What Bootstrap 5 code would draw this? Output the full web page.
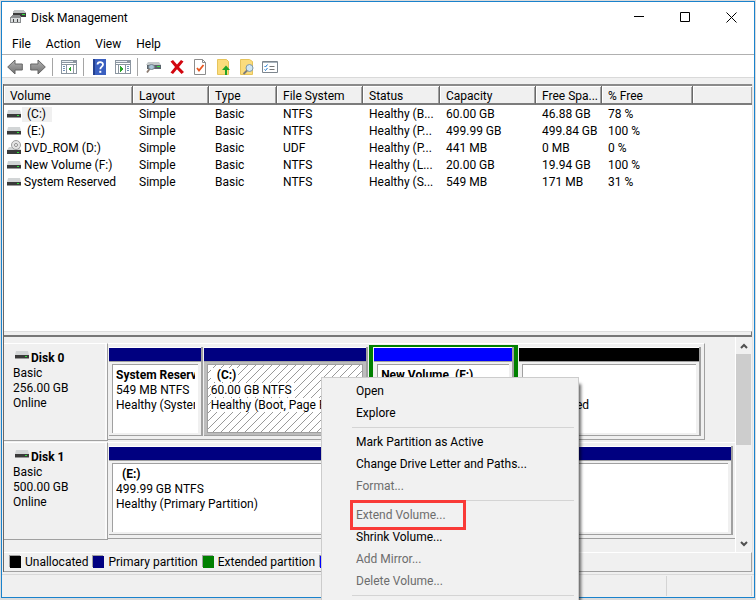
<!DOCTYPE html>
<html lang="en">
<head>
<meta charset="utf-8">
<meta name="viewport" content="width=device-width, initial-scale=1">
<title>Disk Management</title>
<link rel="stylesheet" href="https://cdn.jsdelivr.net/npm/bootstrap@5.3.0/dist/css/bootstrap.min.css">
<style>
  :root { --face: #f0f0f0; --edge: #a0a0a0; --dark: #696969; --navy: #000080; }
  html, body { height: 100%; }
  body { font: 12px/15px Roboto, "Open Sans", sans-serif; color: #000; background: #dcdcdc; overflow: hidden; padding: 1px 1px 2px; }
  button { font: inherit; color: inherit; background: none; border: 0; padding: 0; text-align: left; }
  svg { display: block; flex: none; }
  .app-window { border: 1px solid #1a82cc; height: 100%; background: var(--face); }
  .title-row { height: 30px; padding-left: 8px; gap: 5px; }
  .title-text { padding-top: 2px; }
  .caption-btn { width: 46px; height: 30px; display: flex; align-items: center; justify-content: center; }
  .menu-row { height: 22px; padding: 2px 0 0 10px; gap: 15px; }
  .tool-row { height: 24px; border-top: 1px solid #b0b0b0; border-bottom: 1px solid #d9d9d9; padding: 2px 0 0 5px; background: #fff; }
  .tool-row .sep { width: 1px; height: 18px; background: #a5a5a5; margin: 0 8px 0 6px; }
  .tool-row button + button { margin-left: 9px; }
  .tool-row button + button.tight { margin-left: 7px; }
  .work { margin: 6px 1px 0 1px; border-left: 1px solid var(--dark); border-right: 1px solid #e3e3e3; }
  .vol-list { border-top: 2px solid #8a8a8a; background: #fff; flex: 0 1 247px; }
  .vol-table { table-layout: fixed; width: 100%; border-collapse: separate; border-spacing: 0; }
  .vol-table th { font-weight: 400; height: 19px; line-height: 14px; padding: 3px 0 0 6px; background: var(--face); border-right: 1px solid var(--dark); border-bottom: 2px solid #7c7c7c; box-shadow: inset 1px 1px #fff, inset -1px 0 var(--edge); white-space: nowrap; overflow: hidden; text-overflow: ellipsis; }
  .vol-table th:last-child { border-right: 0; }
  .vol-table td { height: 17px; line-height: 15px; padding: 2px 2px 0 6px; white-space: nowrap; overflow: hidden; text-overflow: ellipsis; }
  .vol-table td:first-child { padding-left: 3px; }
  .vol-item { display: flex; align-items: center; gap: 3px; }
  .vol-item svg { margin: -1px 0 1px; }
  .vol-item .letter { padding: 0 6px 0 5px; margin-left: -2px; }
  .current { background: var(--face); }
  .splitter { height: 6px; border-top: 1px solid #dedede; border-bottom: 2px solid #777; border-right: 1px solid #777; background: var(--face); }
  .disk-area { padding-top: 6px; }
  .disk-row { height: 99px; }
  .disk-label { width: 104px; height: 98px; border-top: 1px solid #fff; border-right: 1px solid var(--edge); border-bottom: 1px solid var(--edge); padding: 7px 0 0 9px; box-shadow: inset -2px 0 #fafafa; flex: none; }
  .disk-name { display: flex; gap: 2px; padding-left: 2px; }
  .disk-strip { height: 97px; border-top: 1px solid #fff; border-right: 1px solid var(--edge); border-bottom: 1px solid var(--edge); padding: 3px 3px 3px 0; }
  .disk-strip.inset { margin-right: 30px; }
  .disk-strip.whole { border-right: 0; padding-right: 2px; }
  .part { min-width: 0; border-right: 2px solid var(--edge); border-bottom: 1px solid var(--edge); margin-left: 1px; display: flex; flex-direction: column; }
  .part-bar { height: 14px; background: var(--navy); border-top: 1px solid #fff; flex: none; }
  .part-body { border-top: 1px solid var(--edge); padding: 2px 3px; flex: 1; display: flex; min-height: 0; }
  .part-info { border-top: 1px solid var(--edge); border-left: 1px solid var(--edge); background: #fff; padding: 3px; flex: 1; min-width: 0; }
  .part-info div { white-space: nowrap; overflow: hidden; }
  .part-info b { padding-left: 6px; }
  .part-info b.named { padding-left: 0; }
  .selected .part-body { background: #bdbdbd; }
  .selected .part-info { border: 1px solid var(--edge); background: #fff url("data:image/svg+xml,%3Csvg xmlns='http://www.w3.org/2000/svg' width='8' height='8' shape-rendering='crispEdges'%3E%3Cpath d='M0 8L8 0' stroke='%23999'/%3E%3C/svg%3E"); }
  .selected .part-info span { background: #fff; padding-right: 2px; }
  .extended { border: solid #008000; border-width: 2px 4px 4px; margin: -2px 0 0 1px; display: flex; min-width: 0; }
  .w-94 { flex: 94 1 94px; } .w-165 { flex: 165 1 165px; } .w-149 { flex: 149 1 149px; } .w-183 { flex: 183 1 183px; }
  .vscroll { width: 17px; border-left: 1px solid #fff; flex: none; }
  .vscroll button { height: 17px; display: flex; align-items: center; justify-content: center; }
  .vscroll .thumb { height: 91px; background: #cdcdcd; margin-right: 1px; }
  .legend { height: 20px; border-top: 1px solid #fff; border-bottom: 1px solid var(--edge); border-right: 1px solid var(--edge); padding-left: 6px; white-space: nowrap; overflow: hidden; }
  .swatch { width: 11px; height: 12px; margin-right: 4px; flex: none; box-shadow: -1px -1px var(--edge); }
  .legend span { margin-right: 5px; }
  .status-row { height: 23px; margin-top: 2px; border-top: 1px solid #d9d9d9; padding: 1px 2px 1px 0; }
  .status-row div { border-right: 1px solid #d4d4d4; }
  .status-row .pane { width: 85px; }
  .ctx-menu { position: absolute; left: 321px; top: 377px; width: 258px; border: 1px solid #ccc; background: #f1f1f1; padding: 2px; box-shadow: 4px 5px 3px -2px rgba(0,0,0,.6); white-space: nowrap; z-index: 5; }
  .ctx-menu button { display: block; width: 100%; height: 22px; padding-left: 32px; }
  .ctx-menu button:disabled { color: #6d6d6d; }
  .ctx-menu hr { margin: 3px 2px 3px 28px; border: 0; border-top: 1px solid #d4d4d4; opacity: 1; }
  .ring { position: absolute; left: 28px; top: 122px; width: 116px; height: 30px; border: 3px solid #f93a37; pointer-events: none; }
</style>
</head>
<body>
<svg width="0" height="0" class="position-absolute" aria-hidden="true">
  <defs>
    <linearGradient id="gArrow" x2="0" y2="1"><stop stop-color="#b5b5b5"/><stop offset="1" stop-color="#6f6f6f"/></linearGradient>
    <symbol id="drive" viewBox="0 0 14 8"><path d="M1 0h12l1 4H0z" fill="#d2d5d6"/><path d="M0 4h14v3H0z" fill="#3a3a3a"/><path d="M0 7h14v1H0z" fill="#999"/><path d="M10 5h2v1h-2z" fill="#2fe03a"/></symbol>
  </defs>
</svg>
<div class="app-window d-flex flex-column">
  <header class="bg-white">
    <div class="title-row d-flex align-items-center">
      <svg width="16" height="14" viewBox="0 0 16 14" shape-rendering="crispEdges"><path d="M4 0h10l2 3v3H3V2z" fill="#bfc3c4"/><path d="M3 3h13v4H3z" fill="#3c3c3c"/><path d="M12 4h3v1h-3z" fill="#2fe03a"/><path d="M0 7l2-2h7l2 2v6H0z" fill="#8a8d8f"/><path d="M1 8h9v4H1z" fill="#d9dcdd"/><path d="M3 9h1v3H3zM7 9h1v3H7z" fill="#444"/></svg>
      <span class="title-text">Disk Management</span>
      <div class="ms-auto d-flex">
        <button class="caption-btn" aria-label="Minimize"><svg width="10" height="10"><path d="M0 4.500h10" stroke="#000"/></svg></button>
        <button class="caption-btn" aria-label="Maximize"><svg width="10" height="10"><path d="M.5.5h9v9h-9z" fill="none" stroke="#000"/></svg></button>
        <button class="caption-btn" aria-label="Close"><svg width="11" height="11"><path d="M.5.5l10 10M10.500.5l-10 10" stroke="#000"/></svg></button>
      </div>
    </div>
    <nav class="menu-row d-flex align-items-center" aria-label="Menu bar">
      <button>File</button><button>Action</button><button>View</button><button>Help</button>
    </nav>
  </header>
  <div class="tool-row d-flex align-items-center" role="toolbar" aria-label="Tools">
    <button aria-label="Back"><svg width="16" height="16" viewBox="0 0 16 16"><path d="M.7 8L8 1v4h7.300v6H8v4z" fill="url(#gArrow)" stroke="#666"/></svg></button>
    <button class="tight" aria-label="Forward"><svg width="16" height="16" viewBox="0 0 16 16"><path d="M15.300 8L8 1v4H.7v6H8v4z" fill="url(#gArrow)" stroke="#666"/></svg></button>
    <i class="sep"></i>
    <button aria-label="Show console tree"><svg width="16" height="14" viewBox="0 0 16 14" shape-rendering="crispEdges"><path d="M0 0h16v14H0z" fill="#8b95a0"/><path d="M1 1h11v1H1z" fill="#e8edf2"/><path d="M1 3h14v1H1z" fill="#fff"/><path d="M1 5h4v8H1zM6 5h6v8H6zM13 5h2v8h-2z" fill="#fff"/><path d="M2 6h2v1H2zM2 8h2v1H2zM2 10h2v1H2z" fill="#6f8fb5"/><path d="M10 6v6L7 9z" fill="#2aa52a"/></svg></button>
    <i class="sep"></i>
    <button aria-label="Help"><svg width="14" height="16" viewBox="0 0 14 16"><path d="M1 0h13v16H1z" fill="#3a5fc0"/><path d="M1 0h2v16H1z" fill="#24408f"/><path d="M5.500 5.500C5.500 2.300 11 2.300 11 5.400c0 2.200-2.700 2.200-2.700 4.800" fill="none" stroke="#fff" stroke-width="1.800"/><path d="M7.300 11.800h2v2h-2z" fill="#fff"/></svg></button>
    <button aria-label="Show action pane"><svg width="16" height="14" viewBox="0 0 16 14" shape-rendering="crispEdges"><path d="M0 0h16v14H0z" fill="#8b95a0"/><path d="M1 1h11v1H1z" fill="#e8edf2"/><path d="M1 3h14v1H1z" fill="#fff"/><path d="M1 5h2v8H1zM4 5h6v8H4zM11 5h4v8h-4z" fill="#fff"/><path d="M12 6h2v1h-2zM12 8h2v1h-2zM12 10h2v1h-2z" fill="#6f8fb5"/><path d="M5 6v6l3-3z" fill="#2aa52a"/></svg></button>
    <i class="sep"></i>
    <button aria-label="Rescan disks"><svg width="15" height="12" viewBox="0 0 15 12"><path d="M2 1h11l2 3H0z" fill="#c3c8ca"/><path d="M1 4h14v4H1z" fill="#5a646c"/><path d="M11 5h3v1h-3z" fill="#35e040"/><ellipse cx="5.500" cy="6" rx="3" ry="2.500" fill="#a8c4d6" stroke="#78838b"/><path d="M3.500 8L1 11.500" stroke="#8a7a70" stroke-width="1.800"/></svg></button>
    <button aria-label="Delete"><svg width="14" height="14" viewBox="0 0 14 14"><path d="M.5 1.500L3 0l4 4.500L11 0l2.500 1.500L9 7l5 5-2.500 2L7 9.300 3 14 .5 12.500 5 7z" fill="#d2060f"/></svg></button>
    <button aria-label="Properties"><svg width="14" height="16" viewBox="0 0 14 16"><path d="M1.500.5h8l3 3v12h-11z" fill="#fff" stroke="#8c8c8c"/><path d="M9.500.5v3h3" fill="none" stroke="#8c8c8c"/><path d="M4 9l2 2.500L10.500 6" fill="none" stroke="#e8561e" stroke-width="1.800"/></svg></button>
    <button aria-label="Open folder"><svg width="15" height="16" viewBox="0 0 15 16"><path d="M1.500.5h9l2 2v13h-11z" fill="#fbdc7c" stroke="#e6c45c"/><path d="M10 6.500l4 4.500h-3v5H9v-5H6z" fill="#21a328"/></svg></button>
    <button aria-label="Find"><svg width="15" height="16" viewBox="0 0 15 16"><path d="M.5.5h9l3 2v13H.5z" fill="#fbdc7c" stroke="#e6c45c"/><circle cx="9.500" cy="9" r="3.500" fill="#cfe6f4" stroke="#7f97a6"/><path d="M7 11.500L3.500 15" stroke="#7b7b7b" stroke-width="1.800"/></svg></button>
    <button class="tight" aria-label="List view"><svg width="16" height="12" viewBox="0 0 16 12"><path d="M.5.5h15v11H.5z" fill="#fff" stroke="#7d868e"/><path d="M1 1.500h14" stroke="#a9b4bd"/><path d="M2.500 5l1 1 2-2.500M2.500 8.500l1 1 2-2.500" fill="none" stroke="#1f78d0"/><path d="M7.500 5.500h5M7.500 8.500h5" stroke="#777"/></svg></button>
  </div>

  <main class="work d-flex flex-column flex-fill overflow-hidden">
    <section class="vol-list overflow-hidden">
      <table class="vol-table">
        <colgroup><col style="width:129px"><col style="width:76px"><col style="width:68px"><col style="width:86px"><col style="width:77px"><col style="width:96px"><col style="width:66px"><col style="width:91px"><col></colgroup>
        <thead><tr><th>Volume</th><th>Layout</th><th>Type</th><th>File System</th><th>Status</th><th>Capacity</th><th>Free Spa...</th><th>% Free</th><th></th></tr></thead>
        <tbody>
          <tr><td><div class="vol-item"><svg width="14" height="8"><use href="#drive"/></svg><span class="letter current">(C:)</span></div></td><td>Simple</td><td>Basic</td><td>NTFS</td><td>Healthy (B...</td><td>60.00 GB</td><td>46.88 GB</td><td>78 %</td><td></td></tr>
          <tr><td><div class="vol-item"><svg width="14" height="8"><use href="#drive"/></svg><span class="letter">(E:)</span></div></td><td>Simple</td><td>Basic</td><td>NTFS</td><td>Healthy (P...</td><td>499.99 GB</td><td>499.84 GB</td><td>100 %</td><td></td></tr>
          <tr><td><div class="vol-item"><svg width="14" height="15" viewBox="0 0 14 15"><path d="M2 7h10l2 3H0z" fill="#d2d5d6"/><path d="M0 10h14v4H0z" fill="#3a3a3a"/><path d="M10 12h2v1h-2z" fill="#2fe03a"/><circle cx="9" cy="5" r="4.500" fill="#e4e4e4" stroke="#9d9d9d"/><circle cx="9" cy="5" r="1.500" fill="#fff" stroke="#8d8d8d"/></svg><span>DVD_ROM (D:)</span></div></td><td>Simple</td><td>Basic</td><td>UDF</td><td>Healthy (P...</td><td>441 MB</td><td>0 MB</td><td>0 %</td><td></td></tr>
          <tr><td><div class="vol-item"><svg width="14" height="8"><use href="#drive"/></svg><span>New Volume (F:)</span></div></td><td>Simple</td><td>Basic</td><td>NTFS</td><td>Healthy (L...</td><td>20.00 GB</td><td>19.94 GB</td><td>100 %</td><td></td></tr>
          <tr><td><div class="vol-item"><svg width="14" height="8"><use href="#drive"/></svg><span>System Reserved</span></div></td><td>Simple</td><td>Basic</td><td>NTFS</td><td>Healthy (S...</td><td>549 MB</td><td>171 MB</td><td>31 %</td><td></td></tr>
        </tbody>
      </table>
    </section>
    <div class="splitter flex-shrink-0"></div>
    <section class="d-flex flex-fill overflow-hidden">
      <div class="disk-area flex-fill overflow-hidden">
        <div class="disk-row d-flex">
          <div class="disk-label">
            <div class="disk-name"><svg width="14" height="8"><use href="#drive"/></svg><b>Disk 0</b></div>
            <div>Basic</div><div>256.00 GB</div><div>Online</div>
          </div>
          <div class="disk-strip inset d-flex flex-fill">
            <div class="part w-94"><div class="part-bar"></div><div class="part-body"><div class="part-info"><div><b class="named">System Reserved</b></div><div>549 MB NTFS</div><div>Healthy (System, Active)</div></div></div></div>
            <div class="part w-165 selected"><div class="part-bar"></div><div class="part-body"><div class="part-info"><div><span><b>(C:)</b></span></div><div><span>60.00 GB NTFS</span></div><div><span>Healthy (Boot, Page File)</span></div></div></div></div>
            <div class="extended w-149"><div class="part flex-fill"><div class="part-bar" style="background:#0000ff"></div><div class="part-body"><div class="part-info"><div><b class="named">New Volume &nbsp;(F:)</b></div></div></div></div></div>
            <div class="part w-183"><div class="part-bar" style="background:#000"></div><div class="part-body"><div class="part-info"><div>&nbsp;</div><div>&nbsp;</div><div>Unallocated</div></div></div></div>
          </div>
        </div>
        <div class="disk-row d-flex">
          <div class="disk-label">
            <div class="disk-name"><svg width="14" height="8"><use href="#drive"/></svg><b>Disk 1</b></div>
            <div>Basic</div><div>500.00 GB</div><div>Online</div>
          </div>
          <div class="disk-strip whole d-flex flex-fill">
            <div class="part flex-fill"><div class="part-bar"></div><div class="part-body"><div class="part-info"><div><b>(E:)</b></div><div>499.99 GB NTFS</div><div>Healthy (Primary Partition)</div></div></div></div>
          </div>
        </div>
      </div>
      <div class="vscroll d-flex flex-column">
        <button aria-label="Scroll up"><svg width="8" height="6"><path d="M1 5l3-3 3 3" fill="none" stroke="#505050" stroke-width="2"/></svg></button>
        <div class="thumb"></div>
        <button class="mt-auto" aria-label="Scroll down"><svg width="8" height="6"><path d="M1 1l3 3 3-3" fill="none" stroke="#505050" stroke-width="2"/></svg></button>
      </div>
    </section>
    <footer class="legend d-flex align-items-center flex-shrink-0">
      <i class="swatch" style="background:#000"></i><span>Unallocated</span>
      <i class="swatch" style="background:#000080"></i><span>Primary partition</span>
      <i class="swatch" style="background:#008000"></i><span>Extended partition</span>
      <i class="swatch" style="background:#0000ff"></i>
    </footer>
  </main>
  <div class="status-row d-flex flex-shrink-0"><div class="flex-fill"></div><div class="pane"></div></div>
</div>

<div class="ctx-menu" role="menu">
  <button role="menuitem">Open</button>
  <button role="menuitem">Explore</button>
  <hr>
  <button role="menuitem">Mark Partition as Active</button>
  <button role="menuitem">Change Drive Letter and Paths...</button>
  <button role="menuitem" disabled>Format...</button>
  <hr>
  <button role="menuitem" disabled>Extend Volume...</button>
  <button role="menuitem">Shrink Volume...</button>
  <button role="menuitem" disabled>Add Mirror...</button>
  <button role="menuitem" disabled>Delete Volume...</button>
  <hr>
  <div class="ring"></div>
</div>
<script src="https://cdn.jsdelivr.net/npm/bootstrap@5.3.0/dist/js/bootstrap.bundle.min.js"></script>
</body>
</html>
